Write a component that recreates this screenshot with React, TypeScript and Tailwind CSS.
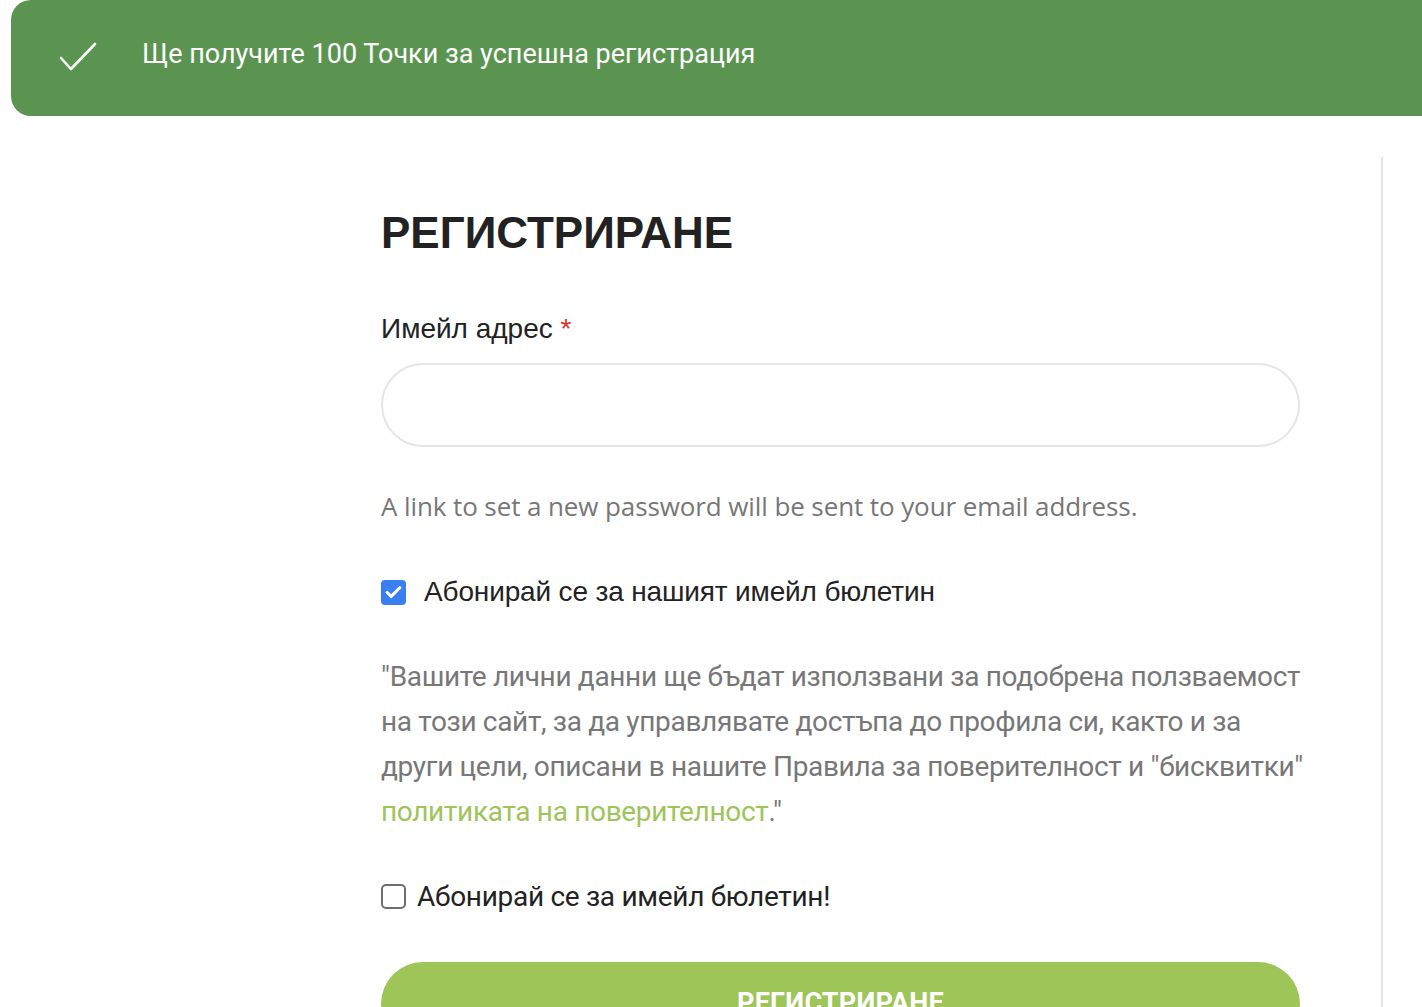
import { Check } from 'lucide-react'

const arial = { fontFamily: '"Liberation Sans", Arial, sans-serif' }

export default function App() {
  return (
    <div className="min-h-[1007px] w-[1422px] overflow-hidden bg-white">
      <div className="ml-[11px] flex h-[116px] items-center rounded-bl-[20px] rounded-tl-[20px] bg-[#5b9450] pb-[8px] pl-[48px] text-white">
        <svg width="38" height="30" viewBox="0 0 38 30" fill="none" className="mt-[6px]">
          <path d="M2 16 L12 27 L36 2" stroke="white" strokeWidth="2.6" strokeLinecap="round" strokeLinejoin="round" />
        </svg>
        <span className="ml-[45px] text-[27px] tracking-[0px] font-['Roboto',sans-serif]">
          Ще получите 100 Точки за успешна регистрация
        </span>
      </div>

      <div className="mt-[41px] w-[1383px] border-r-2 border-[#e4e4e4] pl-[381px] pr-[81px]">
        <h1 className="pt-[50px] text-[44px] font-bold leading-[1.2] text-[#222]" style={arial}>
          РЕГИСТРИРАНЕ
        </h1>

        <label className="mt-[52px] block text-[28px] leading-[1.2] text-[#222]" style={arial}>
          Имейл адрес <span className="text-[#d6302a]">*</span>
        </label>
        <input className="mt-[18px] block h-[84px] w-full rounded-full border-2 border-[#e6e6e6] px-8 outline-none" />

        <p className="mt-[40px] text-[26px] tracking-[-0.1px] text-[#777] font-['Open_Sans',sans-serif]">
          A link to set a new password will be sent to your email address.
        </p>

        <div className="mt-[49px] flex items-center gap-[18px]">
          <span className="flex h-[25px] w-[25px] items-center justify-center rounded-[4px] bg-[#3a7ff2]">
            <Check className="h-[19px] w-[19px] text-white" strokeWidth={4} />
          </span>
          <span className="text-[28px] leading-[1.2] tracking-[-0.15px] text-[#222]" style={arial}>
            Абонирай се за нашият имейл бюлетин
          </span>
        </div>

        <p className="-mr-[10px] mt-[45px] text-[28px] leading-[45px] tracking-[-0.33px] text-[#777] font-['Roboto',sans-serif]">
          "Вашите лични данни ще бъдат използвани за подобрена ползваемост на този сайт, за да управлявате достъпа до профила си, както и за други цели, описани в нашите Правила за поверителност и "бисквитки"{' '}
          <a className="text-[#9ec45a]">политиката на поверителност</a>."
        </p>

        <div className="mt-[46px] flex items-center gap-[11px]">
          <span className="h-[25px] w-[25px] rounded-[5px] border-2 border-[#6e6e6e] bg-white" />
          <span className="text-[28px] leading-[1.2] tracking-[-0.3px] text-[#222] font-['Roboto',sans-serif]">
            Абонирай се за имейл бюлетин!
          </span>
        </div>

        <button className="mt-[48px] flex h-[84px] w-full items-center justify-center rounded-full bg-[#9dc557] text-[27px] font-bold tracking-[0.2px] text-white font-['Roboto',sans-serif]">
          РЕГИСТРИРАНЕ
        </button>
      </div>
    </div>
  )
}
